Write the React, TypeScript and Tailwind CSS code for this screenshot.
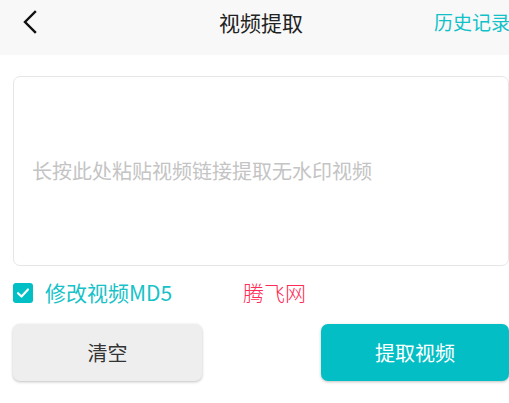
import React from "react";

export default function App() {
  const font = { fontFamily: '"Noto Sans CJK SC", "Noto Sans", Roboto, sans-serif' };
  return (
    <div className="w-[509px] h-[403px] overflow-hidden bg-white" style={font}>
      <div className="w-[522px]">
        <div className="h-[55px] bg-[#f8f8f8] relative">
          <div className="h-[44px] flex items-center justify-center">
            <span className="text-[21px] text-[#222] leading-none">视频提取</span>
          </div>
          <svg className="absolute left-[22px] top-[10px]" width="16" height="24" viewBox="0 0 16 24" fill="none">
            <path d="M13 2 L3 12 L13 22" stroke="#111" strokeWidth="2.4" strokeLinecap="square" />
          </svg>
          <span className="absolute left-[434px] top-[10px] text-[19px] text-[#11c1c8] leading-[24px]">历史记录</span>
        </div>
        <div className="px-[13px] pt-[21px]">
          <div className="h-[190px] border border-[#e6e6e6] rounded-[7px] flex items-center pl-[18px]">
            <span className="text-[20px] text-[#c4c4c4]">长按此处粘贴视频链接提取无水印视频</span>
          </div>
          <div className="flex items-center mt-[15px] h-[24px]">
            <div className="w-[20px] h-[20px] rounded-[3px] bg-[#00bfc5] flex items-center justify-center">
              <svg width="14" height="14" viewBox="0 0 14 14" fill="none">
                <path d="M2 7.2 L5.5 10.5 L12 3.5" stroke="white" strokeWidth="2.2" strokeLinecap="round" strokeLinejoin="round" />
              </svg>
            </div>
            <span className="ml-[12px] w-[198px] text-[21px] text-[#16c2c8]">修改视频MD5</span>
            <span className="text-[21px] text-[#ff2a55] font-light">腾飞网</span>
          </div>
          <div className="flex justify-between mt-[19px]">
            <div className="w-[189px] h-[57px] rounded-[7px] bg-[#eeeeee] shadow-[0_1px_3px_rgba(0,0,0,0.25)] flex items-center justify-center text-[20px] text-[#333]">清空</div>
            <div className="w-[188px] h-[57px] rounded-[7px] bg-[#03bfc5] shadow-[0_1px_3px_rgba(0,0,0,0.25)] flex items-center justify-center text-[20px] text-white">提取视频</div>
          </div>
        </div>
      </div>
    </div>
  );
}
